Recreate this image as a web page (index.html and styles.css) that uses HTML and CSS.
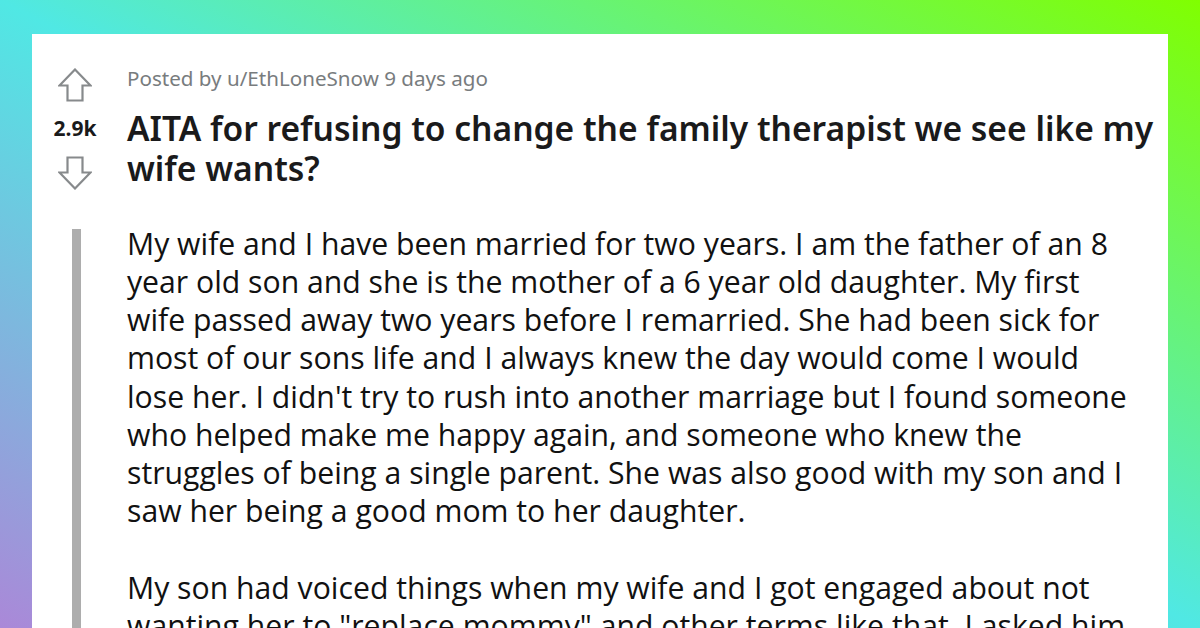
FILE: index.html
```html
<!DOCTYPE html>
<html>
<head>
<meta charset="utf-8">
<link rel="stylesheet" href="styles.css">
</head>
<body>
<main class="card">
  <div class="vote">
    <svg class="arrow" viewBox="0 0 34 34" width="34" height="34"><polygon points="17,1.5 32.5,17.5 24.5,17.5 24.5,32.5 9.5,32.5 9.5,17.5 1.5,17.5" /></svg>
    <span class="score">2.9k</span>
    <svg class="arrow" viewBox="0 0 34 34" width="34" height="34"><polygon points="17,32.5 32.5,16.5 24.5,16.5 24.5,1.5 9.5,1.5 9.5,16.5 1.5,16.5" /></svg>
  </div>
  <header class="head">
    <div class="meta">Posted by u/EthLoneSnow 9 days ago</div>
    <h1 class="title">AITA for refusing to change the family therapist we see like my wife wants?</h1>
  </header>
  <div class="bar-col"><div class="bar"></div></div>
  <div class="body">
    <p>My wife and I have been married for two years. I am the father of an 8 year old son and she is the mother of a 6 year old daughter. My first wife passed away two years before I remarried. She had been sick for most of our sons life and I always knew the day would come I would lose her. I didn't try to rush into another marriage but I found someone who helped make me happy again, and someone who knew the struggles of being a single parent. She was also good with my son and I saw her being a good mom to her daughter.</p>
    <p>My son had voiced things when my wife and I got engaged about not wanting her to "replace mommy" and other terms like that. I asked him</p>
  </div>
</main>
</body>
</html>
```
FILE: styles.css
```css
html, body {
  margin: 0;
  height: 100%;
  overflow: hidden;
}
body {
  background: linear-gradient(to top right, #aa88d8 0%, #50e8e4 50%, #80ff00 100%);
  padding: 34px 32px 0 32px;
  box-sizing: border-box;
}
.card {
  background: #fff;
  height: 100%;
  display: grid;
  grid-template-columns: 95px 1fr;
  grid-template-rows: auto 1fr;
  padding-right: 10px;
}
.vote {
  display: flex;
  flex-direction: column;
  align-items: center;
  padding-top: 34px;
  width: 86px;
}
.arrow {
  fill: none;
  stroke: #878a8c;
  stroke-width: 2.2;
  stroke-linejoin: miter;
  display: block;
}
.score {
  font-family: "Noto Sans", sans-serif;
  font-weight: 700;
  font-size: 21px;
  line-height: 22px;
  color: #1a1a1b;
  margin: 15px 0 17px;
}
.head {
  padding-top: 31px;
}
.meta {
  font-family: "Noto Sans", sans-serif;
  font-size: 20.6px;
  line-height: 26px;
  color: #787c7e;
}
.title {
  margin: 17px 0 0;
  font-family: "Noto Sans", sans-serif;
  font-weight: 600;
  font-size: 33.6px;
  line-height: 40px;
  color: #1a1a1b;
}
.bar-col {
  padding-left: 40px;
  padding-top: 39px;
}
.bar {
  width: 9px;
  height: 100%;
  background: #adadad;
}
.body {
  padding-top: 35px;
  padding-right: 22px;
  font-family: "Open Sans", sans-serif;
  font-size: 30.2px;
  line-height: 38.15px;
  color: #111;
}
.body p {
  margin: 0 0 38.5px;
}
```
